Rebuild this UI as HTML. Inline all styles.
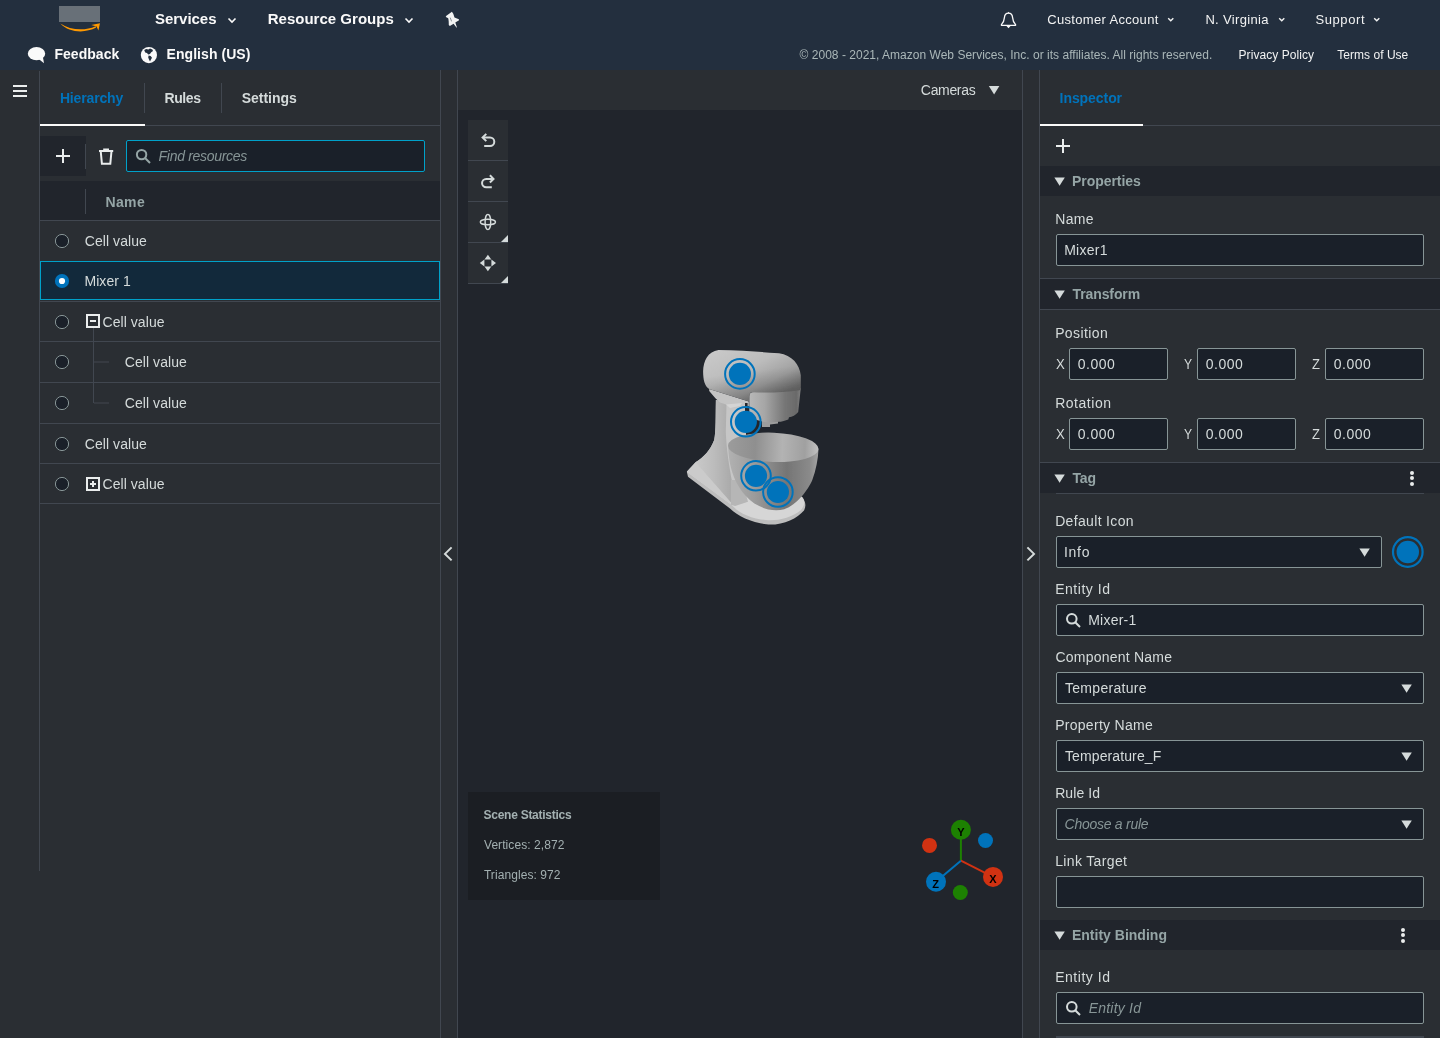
<!DOCTYPE html>
<html lang="en"><head><meta charset="utf-8"><title>Scene Composer</title>
<style>
html,body{margin:0;padding:0;}
body{width:1440px;height:1038px;position:relative;overflow:hidden;background:#2a2e33;font-family:"Liberation Sans", sans-serif;}
div,span,svg,.grp{position:absolute;display:block;box-sizing:border-box;}
.grp{left:0;top:0;width:1440px;height:1038px;}
span{white-space:pre;}
body{will-change:transform;}
</style></head>
<body>
<header class="grp" aria-label="Console navigation">
<div style="left:0px;top:0px;width:1440px;height:70px;background:#232f3e;"></div>
<div style="left:59px;top:6px;width:41px;height:16px;background:#687078;"></div>
<svg style="left:58px;top:22px;" width="46" height="12" viewBox="0 0 46 12"><path d="M2.4 1.5 C12 8.2 27 9.2 37.6 4.2 L38.2 5.6 C27 11.6 11 10.8 2.4 1.5 Z" fill="#ff9900"/><path d="M33.2 2.9 L42 1.2 L40.4 8.4 L38.6 4.6 Z" fill="#ff9900"/></svg>
<span style="left:154.94px;top:8px;font-size:15px;line-height:22px;color:#fafafa;font-weight:700;letter-spacing:-0.019px;">Services</span>
<svg style="left:227px;top:17px;" width="10" height="7" viewBox="0 0 10 7"><path d="M1.5 1.5 L5 5 L8.5 1.5" fill="none" stroke="#fafafa" stroke-width="1.6"/></svg>
<span style="left:267.68px;top:8px;font-size:15px;line-height:22px;color:#fafafa;font-weight:700;letter-spacing:0.019px;">Resource Groups</span>
<svg style="left:404px;top:17px;" width="10" height="7" viewBox="0 0 10 7"><path d="M1.5 1.5 L5 5 L8.5 1.5" fill="none" stroke="#fafafa" stroke-width="1.6"/></svg>
<svg style="left:444px;top:10px;" width="18" height="20" viewBox="0 0 18 20"><path d="M1.7 6.3 L7.9 1.85 L9.1 3.4 L9.35 4.1 L10.5 7.45 L14.85 9.15 L15.05 10.15 L11.3 12.5 L12.95 17.4 L12.4 17.55 L9.6 13.65 L5.85 16.1 L4.8 15.05 L4.7 11.6 L4.35 8.45 L3.55 7.75 L2.85 7.65 Z" fill="#f2f3f3"/><path d="M6.2 7.6 L7.6 11.4" stroke="#232f3e" stroke-width="0.7" opacity="0.7"/></svg>
<svg style="left:999px;top:10px;" width="20" height="20" viewBox="0 0 20 20"><path d="M9.5 3.2 C6.6 3.2 5.6 5.2 5.4 7.6 C5.2 10.6 4.4 12.6 2.4 14.6 L2.4 15.3 L16.6 15.3 L16.6 14.6 C14.6 12.6 13.8 10.6 13.6 7.6 C13.4 5.2 12.4 3.2 9.5 3.2 Z" fill="none" stroke="#fafafa" stroke-width="1.3" stroke-linejoin="round"/><path d="M9.5 1.8 L10.4 3.2 L8.6 3.2 Z M7 15.6 L12 15.6 L9.5 18.3 Z" fill="#fafafa"/></svg>
<span style="left:1047.18px;top:10px;font-size:13px;line-height:20px;color:#f2f3f3;letter-spacing:0.331px;">Customer Account</span>
<svg style="left:1166.5px;top:17px;" width="8" height="7" viewBox="0 0 8 7"><path d="M1.2 1.2 L3.75 3.8 L6.3 1.2" fill="none" stroke="#f2f3f3" stroke-width="1.4"/></svg>
<span style="left:1205.40px;top:10px;font-size:13px;line-height:20px;color:#f2f3f3;letter-spacing:0.329px;">N. Virginia</span>
<svg style="left:1277.5px;top:17px;" width="8" height="7" viewBox="0 0 8 7"><path d="M1.2 1.2 L3.75 3.8 L6.3 1.2" fill="none" stroke="#f2f3f3" stroke-width="1.4"/></svg>
<span style="left:1315.51px;top:10px;font-size:13px;line-height:20px;color:#f2f3f3;letter-spacing:0.581px;">Support</span>
<svg style="left:1372.5px;top:17px;" width="8" height="7" viewBox="0 0 8 7"><path d="M1.2 1.2 L3.75 3.8 L6.3 1.2" fill="none" stroke="#f2f3f3" stroke-width="1.4"/></svg>
<svg style="left:26px;top:45px;" width="22" height="20" viewBox="0 0 22 20"><ellipse cx="10.5" cy="8.7" rx="8.7" ry="6.6" fill="#fafafa"/><path d="M12 13.5 L18 18.2 L16.8 11.5 Z" fill="#fafafa"/></svg>
<span style="left:54.46px;top:44px;font-size:14px;line-height:21px;color:#fafafa;font-weight:700;letter-spacing:0.035px;">Feedback</span>
<svg style="left:139px;top:45px;" width="20" height="20" viewBox="0 0 20 20"><circle cx="9.9" cy="10.1" r="8.1" fill="#fafafa"/><path d="M5.2 5.0 L7.2 4.0 L9.4 4.6 L11.0 3.6 L13.4 4.4 L14.0 6.0 L12.2 7.2 L11.0 9.0 L9.2 9.4 L8.0 8.0 L6.2 7.6 Z M9.6 10.4 L11.6 11.0 L13.0 12.8 L12.0 14.6 L11.0 16.4 L10.0 14.6 L9.2 12.4 Z" fill="#232f3e"/></svg>
<span style="left:166.51px;top:44px;font-size:14px;line-height:21px;color:#fafafa;font-weight:700;letter-spacing:0.063px;">English (US)</span>
<span style="left:799.56px;top:46px;font-size:12px;line-height:18px;color:#aab7b8;letter-spacing:0.018px;">© 2008 - 2021, Amazon Web Services, Inc. or its affiliates. All rights reserved.</span>
<span style="left:1238.55px;top:46px;font-size:12px;line-height:18px;color:#f2f3f3;letter-spacing:0.056px;">Privacy Policy</span>
<span style="left:1337.21px;top:46px;font-size:12px;line-height:18px;color:#f2f3f3;letter-spacing:0.037px;">Terms of Use</span>
</header>
<nav class="grp" aria-label="Side navigation toggle">
<div style="left:13px;top:85px;width:14px;height:2px;background:#eaeded;"></div>
<div style="left:13px;top:90px;width:14px;height:2px;background:#eaeded;"></div>
<div style="left:13px;top:95px;width:14px;height:2px;background:#eaeded;"></div>
<div style="left:39px;top:71px;width:1px;height:800px;background:#414750;"></div>
</nav>
<aside class="grp" aria-label="Hierarchy panel">
<div style="left:440px;top:70px;width:1px;height:968px;background:#414750;"></div>
<div style="left:40px;top:125px;width:400px;height:1px;background:#414750;"></div>
<div style="left:40px;top:124px;width:105px;height:2px;background:#fafafa;"></div>
<div style="left:144px;top:83px;width:1px;height:30px;background:#414750;"></div>
<div style="left:221px;top:83px;width:1px;height:30px;background:#414750;"></div>
<span style="left:59.89px;top:88px;font-size:14px;line-height:21px;color:#0073bb;font-weight:700;letter-spacing:-0.150px;">Hierarchy</span>
<span style="left:164.46px;top:88px;font-size:14px;line-height:21px;color:#d5dbdb;font-weight:700;letter-spacing:-0.383px;">Rules</span>
<span style="left:241.63px;top:88px;font-size:14px;line-height:21px;color:#d5dbdb;font-weight:700;letter-spacing:0.008px;">Settings</span>
<div style="left:40px;top:136px;width:46px;height:40px;background:#21252c;"></div>
<div style="left:85px;top:144px;width:1px;height:25px;background:#414750;"></div>
<div style="left:56px;top:155px;width:14px;height:2px;background:#eaeded;"></div>
<div style="left:62px;top:149px;width:2px;height:14px;background:#eaeded;"></div>
<svg style="left:98px;top:147px;" width="17" height="19" viewBox="0 0 17 19"><path d="M1 4 H15.2 M5.2 2.6 H11" stroke="#eaeded" stroke-width="2" fill="none"/><path d="M2.8 5 L3.9 16.8 H12.3 L13.4 5" fill="none" stroke="#eaeded" stroke-width="2"/></svg>
<div style="left:126px;top:140px;width:299px;height:32px;background:#1a2029;border:1px solid #00a1c9;border-radius:2px;"></div>
<svg style="left:135px;top:148px;" width="17" height="17" viewBox="0 0 17 17"><circle cx="6.6" cy="6.6" r="4.7" fill="none" stroke="#95a5a6" stroke-width="2"/><path d="M10 10 L15 15" stroke="#95a5a6" stroke-width="2"/></svg>
<span style="left:158.60px;top:146px;font-size:14px;line-height:21px;color:#879596;font-style:italic;letter-spacing:-0.299px;">Find resources</span>
<div style="left:40px;top:181px;width:400px;height:39px;background:#21252c;"></div>
<div style="left:40px;top:220px;width:400px;height:1px;background:#414750;"></div>
<div style="left:85px;top:189px;width:1px;height:25px;background:#414750;"></div>
<span style="left:105.62px;top:192px;font-size:14px;line-height:21px;color:#95a5a6;font-weight:700;letter-spacing:0.307px;">Name</span>
<div style="left:40px;top:301px;width:400px;height:1px;background:#414750;"></div>
<div style="left:40px;top:341px;width:400px;height:1px;background:#414750;"></div>
<div style="left:40px;top:382px;width:400px;height:1px;background:#414750;"></div>
<div style="left:40px;top:423px;width:400px;height:1px;background:#414750;"></div>
<div style="left:40px;top:463px;width:400px;height:1px;background:#414750;"></div>
<div style="left:40px;top:503px;width:400px;height:1px;background:#414750;"></div>
<div style="left:40px;top:261px;width:400px;height:39px;background:#12293b;border:1px solid #00a1c9;"></div>
<svg style="left:54px;top:232.5px;" width="16" height="16" viewBox="0 0 16 16"><circle cx="8" cy="8" r="6.6" fill="#1a2029" stroke="#879596" stroke-width="1"/></svg>
<span style="left:84.87px;top:231px;font-size:14px;line-height:21px;color:#d5dbdb;letter-spacing:0.047px;">Cell value</span>
<svg style="left:54px;top:272.5px;" width="16" height="16" viewBox="0 0 16 16"><circle cx="8" cy="8" r="7.1" fill="#0073bb"/><circle cx="8" cy="8" r="3.1" fill="#fff"/></svg>
<span style="left:84.46px;top:271px;font-size:14px;line-height:21px;color:#d5dbdb;letter-spacing:0.056px;">Mixer 1</span>
<svg style="left:54px;top:313.5px;" width="16" height="16" viewBox="0 0 16 16"><circle cx="8" cy="8" r="6.6" fill="#1a2029" stroke="#879596" stroke-width="1"/></svg>
<span style="left:102.52px;top:312px;font-size:14px;line-height:21px;color:#d5dbdb;letter-spacing:0.058px;">Cell value</span>
<svg style="left:54px;top:354px;" width="16" height="16" viewBox="0 0 16 16"><circle cx="8" cy="8" r="6.6" fill="#1a2029" stroke="#879596" stroke-width="1"/></svg>
<span style="left:124.87px;top:352px;font-size:14px;line-height:21px;color:#d5dbdb;letter-spacing:0.047px;">Cell value</span>
<svg style="left:54px;top:395px;" width="16" height="16" viewBox="0 0 16 16"><circle cx="8" cy="8" r="6.6" fill="#1a2029" stroke="#879596" stroke-width="1"/></svg>
<span style="left:124.87px;top:393px;font-size:14px;line-height:21px;color:#d5dbdb;letter-spacing:0.047px;">Cell value</span>
<svg style="left:54px;top:435.5px;" width="16" height="16" viewBox="0 0 16 16"><circle cx="8" cy="8" r="6.6" fill="#1a2029" stroke="#879596" stroke-width="1"/></svg>
<span style="left:84.87px;top:434px;font-size:14px;line-height:21px;color:#d5dbdb;letter-spacing:0.047px;">Cell value</span>
<svg style="left:54px;top:475.5px;" width="16" height="16" viewBox="0 0 16 16"><circle cx="8" cy="8" r="6.6" fill="#1a2029" stroke="#879596" stroke-width="1"/></svg>
<span style="left:102.52px;top:474px;font-size:14px;line-height:21px;color:#d5dbdb;letter-spacing:0.058px;">Cell value</span>
<div style="left:86px;top:314px;width:14px;height:14px;border:2px solid #eaeded;"></div>
<div style="left:90px;top:320px;width:6px;height:2px;background:#eaeded;"></div>
<div style="left:86px;top:476.5px;width:14px;height:14px;border:2px solid #eaeded;"></div>
<div style="left:90px;top:482.5px;width:6px;height:2px;background:#eaeded;"></div>
<div style="left:92px;top:480.5px;width:2px;height:6px;background:#eaeded;"></div>
<div style="left:93px;top:328px;width:1px;height:75px;background:#414750;"></div>
<div style="left:94px;top:361px;width:15px;height:2px;background:#363a41;"></div>
<div style="left:94px;top:402px;width:15px;height:2px;background:#363a41;"></div>
</aside>
<section class="grp" aria-label="Panel splitters">
<svg style="left:442px;top:545px;" width="14" height="18" viewBox="0 0 14 18"><path d="M9.6 2.4 L3 8.9 L9.6 15.4" fill="none" stroke="#d5dbdb" stroke-width="2"/></svg>
<svg style="left:1023px;top:545px;" width="14" height="18" viewBox="0 0 14 18"><path d="M4.4 2.4 L11 8.9 L4.4 15.4" fill="none" stroke="#d5dbdb" stroke-width="2"/></svg>
</section>
<main class="grp" aria-label="Scene viewport">
<div style="left:457px;top:70px;width:1px;height:968px;background:#414750;"></div>
<div style="left:1022px;top:70px;width:1px;height:968px;background:#414750;"></div>
<div style="left:458px;top:110px;width:564px;height:928px;background:#21252c;"></div>
<span style="left:920.87px;top:80px;font-size:14px;line-height:21px;color:#d5dbdb;letter-spacing:-0.335px;">Cameras</span>
<svg style="left:988px;top:85px;" width="12" height="10" viewBox="0 0 12 10"><path d="M0.8 1 H11.4 L6.1 9.4 Z" fill="#d5dbdb"/></svg>
<div style="left:468px;top:120px;width:40px;height:40px;background:#2a2e33;"></div>
<div style="left:468px;top:160px;width:40px;height:1px;background:#414750;"></div>
<div style="left:468px;top:161px;width:40px;height:40px;background:#2a2e33;"></div>
<div style="left:468px;top:201px;width:40px;height:1px;background:#414750;"></div>
<div style="left:468px;top:202px;width:40px;height:40px;background:#2a2e33;"></div>
<div style="left:468px;top:242px;width:40px;height:1px;background:#414750;"></div>
<div style="left:468px;top:243px;width:40px;height:40px;background:#2a2e33;"></div>
<div style="left:468px;top:283px;width:40px;height:1px;background:#414750;"></div>
<svg style="left:478px;top:131px;" width="20" height="20" viewBox="0 0 20 20"><path d="M6.2 15.1 H12 A4.3 4.3 0 0 0 12 6.5 H5" fill="none" stroke="#d5dbdb" stroke-width="2"/><path d="M8.3 2.9 L4.6 6.5 L8.3 10.1" fill="none" stroke="#d5dbdb" stroke-width="2"/></svg>
<svg style="left:478px;top:172px;" width="20" height="20" viewBox="0 0 20 20"><path d="M13.8 15.2 H8.2 A4.15 4.15 0 0 1 8.2 6.9 H15" fill="none" stroke="#d5dbdb" stroke-width="2"/><path d="M11.9 3.3 L15.5 6.9 L11.9 10.5" fill="none" stroke="#d5dbdb" stroke-width="2"/></svg>
<svg style="left:477px;top:211px;" width="22" height="22" viewBox="0 0 22 22"><ellipse cx="10.9" cy="11" rx="7.6" ry="2.8" fill="none" stroke="#d5dbdb" stroke-width="1.4"/><ellipse cx="10.9" cy="11" rx="2.8" ry="7.6" fill="none" stroke="#d5dbdb" stroke-width="1.4"/></svg>
<svg style="left:477px;top:252px;" width="22" height="22" viewBox="0 0 22 22"><path d="M10.9 2.8 L14.3 7.4 H7.5 Z M10.9 19.2 L14.3 14.6 H7.5 Z M2.8 11 L7.4 7.6 V14.4 Z M19 11 L14.4 7.6 V14.4 Z" fill="#d5dbdb"/></svg>
<svg style="left:501px;top:235px;" width="7" height="7" viewBox="0 0 7 7"><path d="M7 0 V7 H0 Z" fill="#d5dbdb"/></svg>
<svg style="left:501px;top:276px;" width="7" height="7" viewBox="0 0 7 7"><path d="M7 0 V7 H0 Z" fill="#d5dbdb"/></svg>
<div style="left:468px;top:792px;width:192px;height:108px;background:#1b1e23;"></div>
<span style="left:483.54px;top:806px;font-size:12px;line-height:18px;color:#a3b0b1;font-weight:700;letter-spacing:-0.263px;">Scene Statistics</span>
<span style="left:483.97px;top:836px;font-size:12px;line-height:18px;color:#a3b0b1;letter-spacing:0.068px;">Vertices: 2,872</span>
<span style="left:483.89px;top:866px;font-size:12px;line-height:18px;color:#a3b0b1;letter-spacing:0.074px;">Triangles: 972</span>
<svg style="left:900px;top:800px;" width="120" height="110" viewBox="0 0 120 110">
<line x1="60.9" y1="60.7" x2="60.9" y2="30" stroke="#1d8102" stroke-width="2"/>
<line x1="60.9" y1="60.7" x2="93" y2="76.9" stroke="#d13212" stroke-width="2"/>
<line x1="60.9" y1="60.7" x2="36" y2="81.8" stroke="#0073bb" stroke-width="2"/>
<circle cx="60.9" cy="29.8" r="10" fill="#1d8102"/>
<circle cx="85.5" cy="40.5" r="7.5" fill="#0073bb"/>
<circle cx="29.5" cy="45.4" r="7.5" fill="#d13212"/>
<circle cx="93" cy="76.9" r="10" fill="#d13212"/>
<circle cx="36" cy="81.8" r="10" fill="#0073bb"/>
<circle cx="60.3" cy="92.5" r="7.5" fill="#1d8102"/>
<g font-family="Liberation Sans, sans-serif" font-weight="700" font-size="11" fill="#000" text-anchor="middle">
<text x="60.9" y="35.8">Y</text><text x="93" y="82.9">X</text><text x="35.6" y="87.8">Z</text></g>
</svg>
<svg style="left:680px;top:340px;" width="150" height="190" viewBox="0 0 150 190">
<defs>
<linearGradient id="gHead" x1="0.1" y1="0" x2="0.95" y2="0.9"><stop offset="0" stop-color="#c9c9c9"/><stop offset="0.4" stop-color="#bcbcbc"/><stop offset="0.68" stop-color="#a0a0a0"/><stop offset="0.88" stop-color="#777777"/><stop offset="1" stop-color="#696969"/></linearGradient>
<linearGradient id="gCyl" x1="0" y1="0" x2="1" y2="0"><stop offset="0" stop-color="#b8b8b8"/><stop offset="0.3" stop-color="#a6a6a6"/><stop offset="0.7" stop-color="#757575"/><stop offset="0.92" stop-color="#6a6a6a"/><stop offset="1" stop-color="#828282"/></linearGradient>
<linearGradient id="gStand" x1="0" y1="0" x2="1" y2="0"><stop offset="0" stop-color="#c9c9c9"/><stop offset="0.5" stop-color="#bcbcbc"/><stop offset="1" stop-color="#a9a9a9"/></linearGradient>
<linearGradient id="gBowlOut" x1="0" y1="0" x2="1" y2="0"><stop offset="0" stop-color="#b2b2b2"/><stop offset="0.3" stop-color="#9a9a9a"/><stop offset="0.65" stop-color="#757575"/><stop offset="0.9" stop-color="#8a8a8a"/><stop offset="1" stop-color="#a5a5a5"/></linearGradient>
<linearGradient id="gBowlIn" x1="0" y1="0" x2="1" y2="0"><stop offset="0" stop-color="#9c9c9c"/><stop offset="0.3" stop-color="#8f8f8f"/><stop offset="0.6" stop-color="#b3b3b3"/><stop offset="0.85" stop-color="#a0a0a0"/><stop offset="1" stop-color="#c2c2c2"/></linearGradient>
<linearGradient id="gBase" x1="0" y1="0" x2="1" y2="1"><stop offset="0" stop-color="#d4d4d4"/><stop offset="1" stop-color="#c2c2c2"/></linearGradient>
<linearGradient id="gHeadV" x1="0" y1="0" x2="0.25" y2="1"><stop offset="0" stop-color="#000" stop-opacity="0"/><stop offset="0.5" stop-color="#000" stop-opacity="0"/><stop offset="1" stop-color="#000" stop-opacity="0.2"/></linearGradient>
<filter id="soft" x="-5%" y="-5%" width="110%" height="110%"><feGaussianBlur stdDeviation="0.45"/></filter>
</defs>
<g filter="url(#soft)">
<!-- base side -->
<path d="M6.8 131.7 L8 136.8 L50 168.5 C58 176.5 72 182.8 88.5 184.6 C104 185 117 178.5 124 170.4 C126.5 166 125.5 161 121.9 156.7 L60 150 Z" fill="#bdbdbd"/>
<!-- base top -->
<path d="M6.8 131.7 L15.6 122.3 L44 112 L60 150 C80 152 105 154 121.9 156.7 C125.5 161 124.6 165.5 121 170 C112 177.5 100 180.6 88 180.2 C72 179.2 60 174 51 164.6 Z" fill="#d6d6d6"/>
<path d="M6.8 131.7 L15.6 122.3 L50 161.5 L51 164.6 Z" fill="#cbcbcb"/>
<!-- stand -->
<path d="M35.9 60 L66 64 L66 100 L65 125 L64 154 L51.5 163 L15.6 122.3 C24 117 30.5 110 34.2 100 C36 92 35.6 75 35.9 60 Z" fill="#c6c6c6"/>
<path d="M35.9 60 L46.5 64 L45.8 92 C46.5 110 49 125 52.1 142 L51.5 163 L15.6 122.3 C24 117 30.5 110 34.2 100 C36 92 35.6 75 35.9 60 Z" fill="url(#gStand)"/>
<path d="M50.9 140 L50.9 164.8 L55.1 165.9 L68 161.7 L62 140 Z" fill="#b6b6b6"/>
<!-- neck plate under head -->
<path d="M29.2 49 L68.8 61.5 L68.8 66 L52 67.5 L46 64.5 L40 62.5 L35.4 58.3 L29.2 51 Z" fill="#c4c4c4"/>
<path d="M46 64.5 L62 63 L60 66 L50 68 Z" fill="#d4d4d4"/>
<!-- small attachments under cylinder -->
<path d="M82 80 H98 V83.5 L90 84.5 V87 H82 Z" fill="#9d9d9d"/>
<path d="M65 63 L67.6 63 L67.6 76 L65 76 Z M70 74 C76 78 79 86 76 94 L66 99 L66 96 C72 92 74 84 70 78 Z" fill="#25272c"/>
<!-- front cylinder -->
<path d="M69.3 56 C69.3 53 71 52 74 52 L120.8 48 L118.2 71.9 C116 75 112 77 109 77.3 L108.3 79.4 C104 81 101 81.6 99 81.8 L90 82.4 C80 82 72 79 69.3 75 Z" fill="url(#gCyl)"/>
<!-- head -->
<path d="M23.1 31.3 C23.4 21 28 11.5 38.5 10.1 C60 10.5 80 11.8 99 13.3 C112 15.5 119.5 24 120.8 35.4 L120.8 50 C104 52.5 86 53 72 52.2 C69.5 52.6 69.2 54 69 61.5 L29.2 49 C24.5 46 23.2 40 23.1 31.3 Z" fill="url(#gHead)"/>
<path d="M23.1 31.3 C23.4 21 28 11.5 38.5 10.1 C60 10.5 80 11.8 99 13.3 C112 15.5 119.5 24 120.8 35.4 L120.8 50 C104 52.5 86 53 72 52.2 C69.5 52.6 69.2 54 69 61.5 L29.2 49 C24.5 46 23.2 40 23.1 31.3 Z" fill="url(#gHeadV)"/>
<!-- bowl outer -->
<path d="M48.1 105.6 C48.5 117 50 125 52.1 131.7 C56 145 66 160 79.2 166 C88 170.5 97 171 104.2 169.2 C117 165 128 150 132.3 140 C136 130 138 120 138.5 109.3 C120 125 70 122 48.1 105.6 Z" fill="url(#gBowlOut)"/>
<!-- bowl inner -->
<ellipse cx="93.3" cy="107.3" rx="45.3" ry="14.6" transform="rotate(2.3 93.3 107.3)" fill="url(#gBowlIn)"/>
</g>
<circle cx="59.9" cy="33.9" r="14.8" fill="none" stroke="#0073bb" stroke-width="2"/><circle cx="59.9" cy="33.9" r="11.1" fill="#0073bb"/><circle cx="65.8" cy="81.8" r="14.8" fill="none" stroke="#0073bb" stroke-width="2"/><circle cx="65.8" cy="81.8" r="11.1" fill="#0073bb"/><circle cx="76" cy="135.8" r="14.8" fill="none" stroke="#0073bb" stroke-width="2"/><circle cx="76" cy="135.8" r="11.1" fill="#0073bb"/><circle cx="97.9" cy="152" r="14.8" fill="none" stroke="#0073bb" stroke-width="2"/><circle cx="97.9" cy="152" r="11.1" fill="#0073bb"/></svg>
</main>
<aside class="grp" aria-label="Inspector panel">
<div style="left:1039px;top:70px;width:1px;height:968px;background:#414750;"></div>
<div style="left:1040px;top:125px;width:400px;height:1px;background:#414750;"></div>
<div style="left:1040px;top:124px;width:103px;height:2px;background:#fafafa;"></div>
<span style="left:1059.60px;top:88px;font-size:14px;line-height:21px;color:#0073bb;font-weight:700;letter-spacing:-0.068px;">Inspector</span>
<div style="left:1056px;top:145px;width:14px;height:2px;background:#eaeded;"></div>
<div style="left:1062px;top:139px;width:2px;height:14px;background:#eaeded;"></div>
<div style="left:1040px;top:166px;width:400px;height:30px;background:#21252c;"></div>
<svg style="left:1054.2px;top:176.7px;" width="12" height="10" viewBox="0 0 12 10"><path d="M0.4 0.6 H10.8 L5.6 8.8 Z" fill="#d5dbdb"/></svg>
<span style="left:1071.93px;top:171px;font-size:14px;line-height:21px;color:#95a5a6;font-weight:700;letter-spacing:-0.034px;">Properties</span>
<span style="left:1055.14px;top:209px;font-size:14px;line-height:21px;color:#d5dbdb;letter-spacing:0.394px;">Name</span>
<div style="left:1056px;top:234px;width:368px;height:32px;background:#1a2029;border:1px solid #879596;border-radius:2px;"></div>
<span style="left:1064.14px;top:240px;font-size:14px;line-height:21px;color:#d5dbdb;letter-spacing:0.270px;">Mixer1</span>
<div style="left:1040px;top:279px;width:400px;height:30px;background:#21252c;"></div>
<div style="left:1040px;top:278px;width:400px;height:1px;background:#414750;"></div>
<div style="left:1040px;top:309px;width:400px;height:1px;background:#414750;"></div>
<svg style="left:1054.2px;top:289.7px;" width="12" height="10" viewBox="0 0 12 10"><path d="M0.4 0.6 H10.8 L5.6 8.8 Z" fill="#d5dbdb"/></svg>
<span style="left:1072.48px;top:284px;font-size:14px;line-height:21px;color:#95a5a6;font-weight:700;letter-spacing:-0.098px;">Transform</span>
<span style="left:1055.14px;top:323px;font-size:14px;line-height:21px;color:#d5dbdb;letter-spacing:0.402px;">Position</span>
<span style="left:1055.14px;top:393px;font-size:14px;line-height:21px;color:#d5dbdb;letter-spacing:0.539px;">Rotation</span>
<span style="left:1055.52px;top:354px;font-size:14px;line-height:21px;color:#d5dbdb;transform:scaleX(0.94);transform-origin:0 0;">X</span>
<div style="left:1069px;top:348px;width:99px;height:32px;background:#1a2029;border:1px solid #879596;border-radius:2px;"></div>
<span style="left:1077.82px;top:354px;font-size:14px;line-height:21px;color:#d5dbdb;letter-spacing:0.476px;">0.000</span>
<span style="left:1183.93px;top:354px;font-size:14px;line-height:21px;color:#d5dbdb;transform:scaleX(0.87);transform-origin:0 0;">Y</span>
<div style="left:1197px;top:348px;width:99px;height:32px;background:#1a2029;border:1px solid #879596;border-radius:2px;"></div>
<span style="left:1205.82px;top:354px;font-size:14px;line-height:21px;color:#d5dbdb;letter-spacing:0.476px;">0.000</span>
<span style="left:1312.34px;top:354px;font-size:14px;line-height:21px;color:#d5dbdb;transform:scaleX(0.93);transform-origin:0 0;">Z</span>
<div style="left:1325px;top:348px;width:99px;height:32px;background:#1a2029;border:1px solid #879596;border-radius:2px;"></div>
<span style="left:1333.82px;top:354px;font-size:14px;line-height:21px;color:#d5dbdb;letter-spacing:0.476px;">0.000</span>
<span style="left:1055.52px;top:424px;font-size:14px;line-height:21px;color:#d5dbdb;transform:scaleX(0.94);transform-origin:0 0;">X</span>
<div style="left:1069px;top:418px;width:99px;height:32px;background:#1a2029;border:1px solid #879596;border-radius:2px;"></div>
<span style="left:1077.82px;top:424px;font-size:14px;line-height:21px;color:#d5dbdb;letter-spacing:0.476px;">0.000</span>
<span style="left:1183.93px;top:424px;font-size:14px;line-height:21px;color:#d5dbdb;transform:scaleX(0.87);transform-origin:0 0;">Y</span>
<div style="left:1197px;top:418px;width:99px;height:32px;background:#1a2029;border:1px solid #879596;border-radius:2px;"></div>
<span style="left:1205.82px;top:424px;font-size:14px;line-height:21px;color:#d5dbdb;letter-spacing:0.476px;">0.000</span>
<span style="left:1312.34px;top:424px;font-size:14px;line-height:21px;color:#d5dbdb;transform:scaleX(0.93);transform-origin:0 0;">Z</span>
<div style="left:1325px;top:418px;width:99px;height:32px;background:#1a2029;border:1px solid #879596;border-radius:2px;"></div>
<span style="left:1333.82px;top:424px;font-size:14px;line-height:21px;color:#d5dbdb;letter-spacing:0.476px;">0.000</span>
<div style="left:1040px;top:463px;width:400px;height:30px;background:#21252c;"></div>
<div style="left:1040px;top:462px;width:400px;height:1px;background:#414750;"></div>
<div style="left:1056px;top:493px;width:368px;height:1px;background:#414750;"></div>
<svg style="left:1054.2px;top:473.7px;" width="12" height="10" viewBox="0 0 12 10"><path d="M0.4 0.6 H10.8 L5.6 8.8 Z" fill="#d5dbdb"/></svg>
<span style="left:1072.48px;top:468px;font-size:14px;line-height:21px;color:#95a5a6;font-weight:700;letter-spacing:-0.168px;">Tag</span>
<div style="left:1410px;top:470.5px;width:4px;height:4px;background:#eaeded;border-radius:50%;"></div>
<div style="left:1410px;top:476.2px;width:4px;height:4px;background:#eaeded;border-radius:50%;"></div>
<div style="left:1410px;top:482px;width:4px;height:4px;background:#eaeded;border-radius:50%;"></div>
<span style="left:1055.14px;top:511px;font-size:14px;line-height:21px;color:#d5dbdb;letter-spacing:0.340px;">Default Icon</span>
<div style="left:1056px;top:536px;width:326px;height:32px;background:#1a2029;border:1px solid #879596;border-radius:2px;"></div>
<span style="left:1063.97px;top:542px;font-size:14px;line-height:21px;color:#d5dbdb;letter-spacing:0.700px;">Info</span>
<svg style="left:1359px;top:547.6px;" width="12" height="10" viewBox="0 0 12 10"><path d="M0.4 0.6 H10.8 L5.6 8.8 Z" fill="#d5dbdb"/></svg>
<svg style="left:1390px;top:534px;" width="36" height="36" viewBox="0 0 36 36"><circle cx="17.8" cy="18" r="14.8" fill="none" stroke="#0073bb" stroke-width="2.2"/><circle cx="17.8" cy="18" r="11.2" fill="#0073bb"/></svg>
<span style="left:1055.14px;top:579px;font-size:14px;line-height:21px;color:#d5dbdb;letter-spacing:0.532px;">Entity Id</span>
<div style="left:1056px;top:604px;width:368px;height:32px;background:#1a2029;border:1px solid #879596;border-radius:2px;"></div>
<svg style="left:1065px;top:612.1px;" width="17" height="17" viewBox="0 0 17 17"><circle cx="6.8" cy="6.8" r="4.8" fill="none" stroke="#d5dbdb" stroke-width="2"/><path d="M10.2 10.2 L15 15" stroke="#d5dbdb" stroke-width="2"/></svg>
<span style="left:1088.14px;top:610px;font-size:14px;line-height:21px;color:#d5dbdb;letter-spacing:0.252px;">Mixer-1</span>
<span style="left:1055.52px;top:647px;font-size:14px;line-height:21px;color:#d5dbdb;letter-spacing:0.221px;">Component Name</span>
<div style="left:1056px;top:672px;width:368px;height:32px;background:#1a2029;border:1px solid #879596;border-radius:2px;"></div>
<span style="left:1064.94px;top:678px;font-size:14px;line-height:21px;color:#d5dbdb;letter-spacing:0.310px;">Temperature</span>
<svg style="left:1401px;top:683.6px;" width="12" height="10" viewBox="0 0 12 10"><path d="M0.4 0.6 H10.8 L5.6 8.8 Z" fill="#d5dbdb"/></svg>
<span style="left:1055.14px;top:715px;font-size:14px;line-height:21px;color:#d5dbdb;letter-spacing:0.292px;">Property Name</span>
<div style="left:1056px;top:740px;width:368px;height:32px;background:#1a2029;border:1px solid #879596;border-radius:2px;"></div>
<span style="left:1064.94px;top:746px;font-size:14px;line-height:21px;color:#d5dbdb;letter-spacing:0.114px;">Temperature_F</span>
<svg style="left:1401px;top:751.6px;" width="12" height="10" viewBox="0 0 12 10"><path d="M0.4 0.6 H10.8 L5.6 8.8 Z" fill="#d5dbdb"/></svg>
<span style="left:1055.14px;top:783px;font-size:14px;line-height:21px;color:#d5dbdb;letter-spacing:0.093px;">Rule Id</span>
<div style="left:1056px;top:808px;width:368px;height:32px;background:#1a2029;border:1px solid #879596;border-radius:2px;"></div>
<span style="left:1064.62px;top:814px;font-size:14px;line-height:21px;color:#879596;font-style:italic;letter-spacing:-0.269px;">Choose a rule</span>
<svg style="left:1401px;top:819.6px;" width="12" height="10" viewBox="0 0 12 10"><path d="M0.4 0.6 H10.8 L5.6 8.8 Z" fill="#d5dbdb"/></svg>
<span style="left:1055.14px;top:851px;font-size:14px;line-height:21px;color:#d5dbdb;letter-spacing:0.356px;">Link Target</span>
<div style="left:1056px;top:876px;width:368px;height:32px;background:#1a2029;border:1px solid #879596;border-radius:2px;"></div>
<div style="left:1040px;top:920px;width:400px;height:30px;background:#21252c;"></div>
<svg style="left:1054.2px;top:930.7px;" width="12" height="10" viewBox="0 0 12 10"><path d="M0.4 0.6 H10.8 L5.6 8.8 Z" fill="#d5dbdb"/></svg>
<span style="left:1071.93px;top:925px;font-size:14px;line-height:21px;color:#95a5a6;font-weight:700;letter-spacing:0.012px;">Entity Binding</span>
<div style="left:1401px;top:927.5px;width:4px;height:4px;background:#eaeded;border-radius:50%;"></div>
<div style="left:1401px;top:933.2px;width:4px;height:4px;background:#eaeded;border-radius:50%;"></div>
<div style="left:1401px;top:939px;width:4px;height:4px;background:#eaeded;border-radius:50%;"></div>
<span style="left:1055.14px;top:967px;font-size:14px;line-height:21px;color:#d5dbdb;letter-spacing:0.532px;">Entity Id</span>
<div style="left:1056px;top:992px;width:368px;height:32px;background:#1a2029;border:1px solid #879596;border-radius:2px;"></div>
<svg style="left:1065px;top:1000.1px;" width="17" height="17" viewBox="0 0 17 17"><circle cx="6.8" cy="6.8" r="4.8" fill="none" stroke="#d5dbdb" stroke-width="2"/><path d="M10.2 10.2 L15 15" stroke="#d5dbdb" stroke-width="2"/></svg>
<span style="left:1088.77px;top:998px;font-size:14px;line-height:21px;color:#879596;font-style:italic;letter-spacing:0.197px;">Entity Id</span>
<div style="left:1056px;top:1036px;width:368px;height:2px;background:#414750;"></div>
</aside>
</body></html>
